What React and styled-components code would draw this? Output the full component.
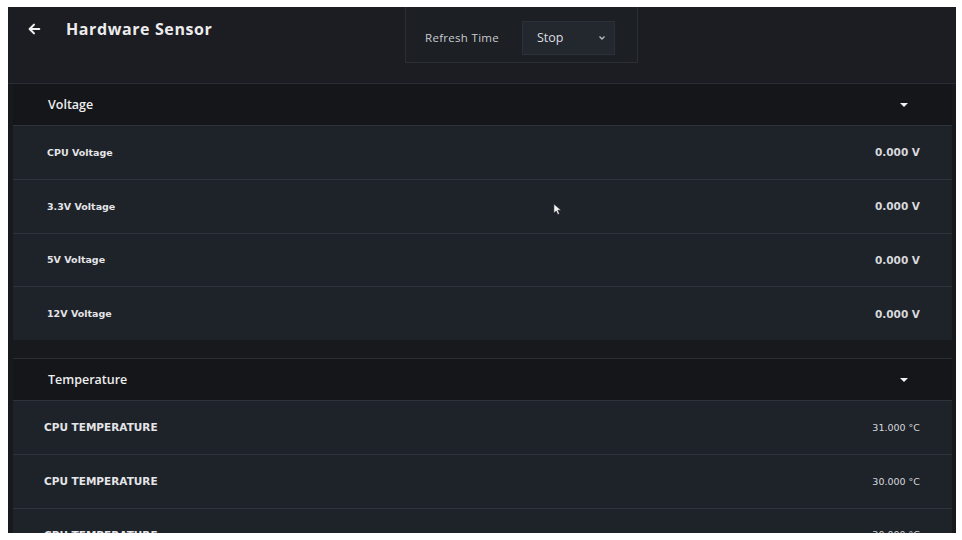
import React from 'react'
import styled, { createGlobalStyle } from 'styled-components'

const sections = [
    {
        title: 'Voltage',
        rows: [
            { label: 'CPU Voltage', value: '0.000 V' },
            { label: '3.3V Voltage', value: '0.000 V' },
            { label: '5V Voltage', value: '0.000 V' },
            { label: '12V Voltage', value: '0.000 V' },
        ],
    },
    {
        title: 'Temperature',
        rows: [
            { label: 'CPU TEMPERATURE', value: '31.000 °C' },
            { label: 'CPU TEMPERATURE', value: '30.000 °C' },
            { label: 'CPU TEMPERATURE', value: '30.000 °C' },
        ],
    },
]

function App() {
    return (
        <>
            <GlobalStyle />
            <Panel>
                <Header>
                    <TitleArea>
                        <BackArrow viewBox="0 0 16 16">
                            <path d="M14 8H3.5M8 3 3 8l5 5" fill="none" stroke="#f2f2f2" strokeWidth="2.4" strokeLinecap="round" strokeLinejoin="round" />
                        </BackArrow>
                        <Title>Hardware Sensor</Title>
                    </TitleArea>
                    <RefreshBox>
                        <RefreshLabel>Refresh Time</RefreshLabel>
                        <Select>
                            <span>Stop</span>
                            <svg width="8" height="6" viewBox="0 0 8 6">
                                <path d="M1.5 1.5 4 4l2.5-2.5" fill="none" stroke="#b8bcc4" strokeWidth="1.3" />
                            </svg>
                        </Select>
                    </RefreshBox>
                </Header>
                <Content>
                    {sections.map((section, i) => (
                        <Section key={section.title} $first={i === 0}>
                            <SectionHeader>
                                <span>{section.title}</span>
                                <Caret />
                            </SectionHeader>
                            {section.rows.map((row, j) => (
                                <Row key={j}>
                                    <Label $upper={i === 1}>{row.label}</Label>
                                    <Value $upper={i === 1}>{row.value}</Value>
                                </Row>
                            ))}
                        </Section>
                    ))}
                </Content>
                <Cursor viewBox="0 0 10 14">
                    <path d="M1 1v10l2.6-2.4L5.4 12.6l1.8-.8-1.8-4H9z" fill="#f4f4f4" stroke="#1b1e23" strokeWidth="0.6" />
                </Cursor>
            </Panel>
        </>
    )
}

export default App

const GlobalStyle = createGlobalStyle`
    body {
        margin: 0;
        background: #ffffff;
        font-family: "Open Sans", "Liberation Sans", sans-serif;
    }
`

const Panel = styled.div`
    position: relative;
    margin: 7px 6px 0 8px;
    height: 526px;
    background: #1a1c21;
    overflow: hidden;
`

const Header = styled.div`
    display: flex;
    height: 76px;
    border-bottom: 1px solid #2a2d34;
    background: #1b1d22;
`

const TitleArea = styled.div`
    flex: 0 0 397px;
    display: flex;
    align-items: center;
    align-self: flex-start;
    height: 44px;
    padding-left: 19px;
    box-sizing: border-box;
`

const BackArrow = styled.svg`
    width: 14px;
    height: 14px;
    margin-right: 25px;
`

const Title = styled.div`
    color: #ececec;
    font-size: 16px;
    font-weight: 700;
    letter-spacing: 0.6px;
`

const RefreshBox = styled.div`
    display: flex;
    align-items: center;
    align-self: flex-start;
    width: 233px;
    height: 56px;
    box-sizing: border-box;
    padding: 6px 0 0 19px;
    border: 1px solid #2b2e35;
    border-top: none;
    background: #1c1f24;
`

const RefreshLabel = styled.div`
    color: #c9cbcf;
    font-size: 11.5px;
    letter-spacing: 0.3px;
    width: 97px;
`

const Select = styled.div`
    display: flex;
    align-items: center;
    justify-content: space-between;
    width: 93px;
    height: 34px;
    box-sizing: border-box;
    padding: 0 8px 0 14px;
    background: #23272e;
    border: 1px solid #2c3038;
    color: #dcdde0;
    font-size: 12.5px;
`

const Content = styled.div`
    padding: 0 4px 0 5px;
    background: #17191d;
`

const Section = styled.div`
    margin-top: ${p => (p.$first ? '0' : '18px')};
    border-top: ${p => (p.$first ? 'none' : '1px solid #2a2d34')};
`

const SectionHeader = styled.div`
    display: flex;
    align-items: center;
    justify-content: space-between;
    height: 41px;
    padding: 0 44px 0 35px;
    background: #14161a;
    color: #eeeeee;
    font-size: 12.5px;
    font-weight: 600;
`

const Caret = styled.div`
    width: 0;
    height: 0;
    border-left: 4px solid transparent;
    border-right: 4px solid transparent;
    border-top: 4px solid #f2f2f2;
`

const Row = styled.div`
    display: flex;
    align-items: center;
    justify-content: space-between;
    height: 52.75px;
    padding: 0 32px 0 34px;
    background: #1e2229;
    border-top: 1px solid #2f333b;
`

const Label = styled.div`
    color: #e4e5e8;
    font-family: "DejaVu Sans", "Liberation Sans", sans-serif;
    font-size: ${p => (p.$upper ? '10.5px' : '9.5px')};
    font-weight: 700;
    margin-left: ${p => (p.$upper ? '-3px' : '0')};
`

const Value = styled.div`
    color: #d8d9dc;
    font-family: "DejaVu Sans", "Liberation Sans", sans-serif;
    font-size: ${p => (p.$upper ? '9.5px' : '10.5px')};
    font-weight: ${p => (p.$upper ? 400 : 700)};
`

const Cursor = styled.svg`
    position: absolute;
    left: 545px;
    top: 196px;
    width: 9px;
    height: 13px;
`
